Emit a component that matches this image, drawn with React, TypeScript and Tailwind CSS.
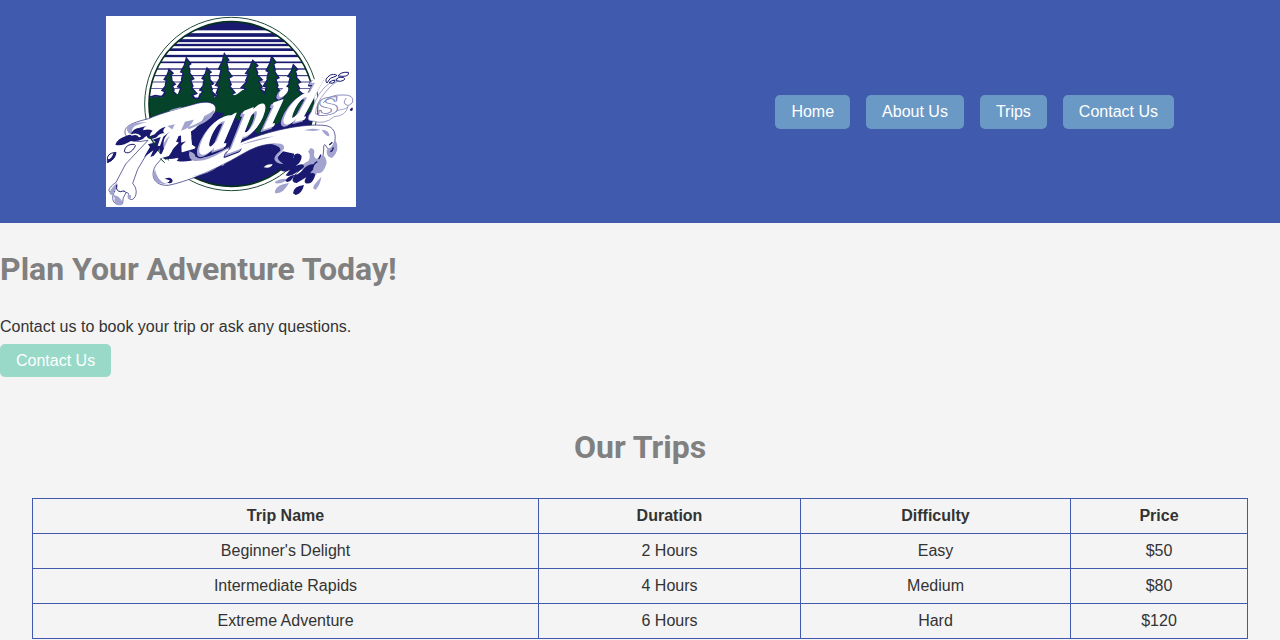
const NAV_LINKS = ["Home", "About Us", "Trips", "Contact Us"];

const TRIPS = [
  { name: "Beginner's Delight", duration: "2 Hours", difficulty: "Easy", price: "$50" },
  { name: "Intermediate Rapids", duration: "4 Hours", difficulty: "Medium", price: "$80" },
  { name: "Extreme Adventure", duration: "6 Hours", difficulty: "Hard", price: "$120" },
];

const NAVY = "#191970";
const GREEN = "#05432a";
const LILAC = "#a3a3cf";

// Sky bars behind the trees, thinning out toward the horizon
const SKY_LINES = [
  { y: 75, h: 11 },
  { y: 92, h: 9 },
  { y: 105, h: 7 },
  { y: 119, h: 8 },
  { y: 138, h: 7 },
  { y: 157, h: 5 },
  { y: 177, h: 4 },
  { y: 197, h: 3 },
  { y: 216, h: 2.5 },
  { y: 236, h: 2 },
];

const TREES = [
  { x: 207, top: 178, w: 20 },
  { x: 259, top: 144, w: 27 },
  { x: 321, top: 174, w: 21 },
  { x: 373, top: 131, w: 28 },
  { x: 458, top: 151, w: 40 },
  { x: 515, top: 139, w: 26 },
  { x: 580, top: 164, w: 25 },
];

const LETTERS = [
  { char: "R", x: 168, y: 447, size: 185, slope: "skewY(-16) skewX(-18)", shade: false },
  { char: "a", x: 291, y: 437, size: 186, slope: "skewY(-19) skewX(-18)", shade: true },
  { char: "p", x: 404, y: 388, size: 158, slope: "skewY(-21) skewX(-16)", shade: true },
  { char: "i", x: 488, y: 358, size: 148, slope: "skewY(-18) skewX(-20)", shade: true },
  { char: "d", x: 544, y: 344, size: 158, slope: "skewY(-14) skewX(-24)", shade: true },
];

function treePath(x: number, top: number, w: number) {
  const tiers = 6;
  const step = (278 - top) / tiers;
  let left = "";
  let right = "";
  for (let i = 1; i <= tiers; i++) {
    const y = top + step * i;
    const reach = 5 + (w * i) / tiers;
    const jitter = i % 2 ? 4 : -3;
    right += ` L${x + reach + jitter} ${y - 5} L${x + reach * 0.7} ${y}`;
    left = ` L${x - reach * 0.7} ${y} L${x - reach + jitter} ${y - 3}` + left;
  }
  return `M${x} ${top}${right}${left} Z`;
}

function Logo() {
  return (
    <svg viewBox="18 18 750 573" className="block h-[191px] w-[250px] bg-white">
      <defs>
        <clipPath id="badge">
          <circle cx="394" cy="282" r="247" />
        </clipPath>
      </defs>

      {/* Badge */}
      <circle cx="394" cy="282" r="260" fill="#fff" stroke="#1d4a35" strokeWidth="3" />
      <g clipPath="url(#badge)">
        <rect x="140" y="30" width="510" height="31" fill={NAVY} />
        {SKY_LINES.map((l) => (
          <rect key={l.y} x="140" y={l.y - l.h / 2} width="510" height={l.h} fill={NAVY} />
        ))}
        {TREES.map((t) => (
          <path key={t.x} d={treePath(t.x, t.top, t.w)} fill={GREEN} stroke={NAVY} strokeWidth="4" />
        ))}
        <path
          d="M140 266 L166 259 L184 262 L198 249 L232 253 L246 243 L274 256 L284 265 L296 266 L304 246 L333 248 L342 262 L354 264 L358 246 L390 248 L404 256 L412 252 L428 240 L482 242 L497 255 L507 242 L535 244 L549 255 L562 244 L600 250 L622 259 L650 263 V540 H140 Z"
          fill={GREEN}
        />
        <path d="M140 264 L166 257 L184 260 L196 250 M274 255 L284 264 L296 265 L302 250 M600 248 L622 257 L650 261" fill="none" stroke={NAVY} strokeWidth="5" />
        <path d="M140 356 L235 352 Q290 345 340 325 L400 320 L480 375 L550 330 L650 300 V540 H140 Z" fill={NAVY} />
        <path d="M190 350 Q270 352 330 334 L310 346 Q250 360 195 355 Z" fill={GREEN} />
      </g>
      <circle cx="394" cy="282" r="247" fill="none" stroke="#06301f" strokeWidth="5" />

      {/* Water running under the lettering */}
      <path
        d="M146 326 C180 310 245 293 292 280 C324 272 350 278 347 300 C342 323 305 340 264 352 L236 370 L246 388 L212 428 L198 446 L224 436 Q240 456 280 448 C335 444 372 418 420 398 C500 364 610 338 678 347 C712 352 710 394 696 411 Q684 425 677 406 Q670 398 671 420 L667 458 L651 484 L622 470 L597 480 L575 466 L544 446 Q522 448 541 423 Q562 405 522 402 C470 402 433 430 392 452 C330 484 265 514 205 526 C159 528 149 493 169 464 L190 440 L173 410 L157 404 L113 478 L98 520 C120 544 103 574 91 568 C78 562 94 547 78 548 Q66 565 68 580 C45 593 28 568 45 543 C17 553 24 533 48 517 L77 462 L144 391 Q88 404 76 373 C70 352 87 340 146 326 Z"
        fill="#fff"
        stroke={NAVY}
        strokeWidth="2"
      />
      <path d="M80 356 Q88 336 142 336 Q122 340 104 348 Q90 361 99 373 Q83 374 80 356Z" fill={LILAC} />
      <path d="M205 304 Q225 293 248 292 Q230 302 205 304Z" fill={LILAC} />
      <path
        d="M202 348 C251 334 316 327 341 299 C342 323 306 339 270 353 C241 363 217 379 204 398 C193 417 194 433 217 430 C207 441 184 433 187 416 C190 392 210 375 225 364 Z"
        fill={LILAC}
      />
      <path
        d="M211 364 Q189 381 190 407 Q190 427 214 420 Q252 403 231 395 Q215 399 209 400 Q229 373 261 360 L291 352 Q251 383 237 400 Q228 418 258 417 Q272 418 268 431 Q261 448 297 443 Q258 460 230 452 Q243 440 243 425 Q218 441 197 449 Q175 438 179 410 L190 380 Z"
        fill={NAVY}
      />
      <path d="M276 351 L349 306 L374 310 L334 356 Q292 390 294 421 Q252 434 249 452 Q228 438 248 425 Q286 416 269 398 Q253 379 306 346 Z" fill={NAVY} />
      <path d="M268 424 Q286 429 286 440 Q312 447 347 431 L394 407 Q330 455 283 453 Q263 449 268 424Z" fill={LILAC} />
      <path d="M270 500 Q315 492 354 471 Q325 494 270 500 M364 464 L378 458 L368 468Z M420 405 Q465 386 525 378 Q475 392 420 405Z M612 361 Q637 352 662 360 L640 363Z" fill={LILAC} />
      <path d="M665 359 Q688 360 688 379 Q676 378 665 359Z" fill={LILAC} />
      <path d="M165 478 Q146 525 207 523 Q174 520 165 478Z" fill={LILAC} />
      <path d="M194 506 Q216 497 218 514 Q213 525 199 516 Q208 519 209 511Z" fill={NAVY} />
      <path d="M186 432 L207 451 M176 441 L194 458" stroke={GREEN} strokeWidth="3" />

      {/* Lettering */}
      {LETTERS.map((l) => (
        <g
          key={l.char}
          transform={`translate(${l.x} ${l.y}) ${l.slope}`}
          fontFamily="Liberation Serif, serif"
          fontSize={l.size}
          fontWeight="bold"
          fontStyle="italic"
          strokeLinejoin="round"
        >
          {l.shade && (
            <text x="-5" y="5" fill={LILAC} stroke={NAVY} strokeWidth="11" paintOrder="stroke" aria-hidden="true">
              {l.char}
            </text>
          )}
          {l.shade && (
            <text x="-5" y="4" fill={LILAC} stroke={LILAC} strokeWidth="6" aria-hidden="true">
              {l.char}
            </text>
          )}
          <text fill="#fff" stroke="#fff" strokeWidth="4">
            {l.char}
          </text>
        </g>
      ))}
      {/* Bowl of the R and the gap between its leg and the next letter */}
      <path d="M262 352 Q308 337 334 312 Q340 304 341 299 Q347 322 298 345 L266 358 Z" fill={LILAC} />
      <path d="M201 447 L222 414 Q236 398 258 394 Q236 412 234 426 Q246 424 248 434 Q234 448 201 447 Z" fill={NAVY} />
      <path d="M293 352 L338 330 L316 356 Q292 382 290 412 Q276 410 276 394 Q270 376 293 352Z" fill={NAVY} />

      {/* Spray at the right of the word */}
      <path
        d="M634 305 Q651 246 690 218 Q712 198 733 207 Q701 213 674 249 Q649 278 646 311 Q673 327 713 301 Q745 296 744 289 Q738 318 702 320 Q675 345 638 333 Q613 333 634 305Z"
        fill="#fff"
        stroke="#7777b3"
        strokeWidth="2"
      />
      <text
        transform="translate(656 317) rotate(-8) scale(1.6 1)"
        fontFamily="Liberation Serif, serif"
        fontSize="108"
        fontWeight="bold"
        fontStyle="italic"
        fill="#fff"
        stroke="#7777b3"
        strokeWidth="2"
      >
        s
      </text>
      <path d="M669 279 Q690 253 726 255 Q763 253 758 276 Q747 291 738 284 Q727 279 739 264" fill="none" stroke="#7777b3" strokeWidth="2.5" />
      <path d="M681 219 Q671 208 691 195 Q713 190 709 198 L691 205 Z M708 212 Q713 198 731 203 Q741 209 721 214Z M714 198 Q722 185 745 187 Q748 199 729 199Z M687 218 Q698 208 705 212 Q707 217 696 220Z" fill="#fff" stroke={NAVY} strokeWidth="3" />
      <path d="M749 300 Q756 289 758 294 Q760 302 753 303Z" fill={NAVY} />

      {/* Left drops */}
      <path d="M46 404 Q53 386 76 379 Q91 370 95 377 Q112 372 116 381 Q125 384 143 367 Q133 398 93 393 Q65 410 46 404Z" fill={NAVY} />
      <path d="M93 373 Q98 355 119 353 L140 348 Q128 354 130 361 Q145 355 158 362 Q150 368 149 379 L164 373 Q179 354 197 350 Q184 364 194 370 Q180 368 170 382 Q145 393 140 378 Q120 389 122 377 Q111 367 93 373Z" fill={NAVY} />
      <path d="M158 389 L182 381 L173 407 L185 409 L161 437 L151 441 L160 421 L132 442 L150 411 L144 403 L167 397Z" fill={NAVY} />
      <path d="M149 379 L165 405" stroke={GREEN} strokeWidth="4" />
      <path d="M22 451 Q19 429 48 427 Q47 448 22 458Z M73 425 Q75 405 96 403 Q115 401 98 420 Q84 434 73 425Z" fill="#fff" stroke={NAVY} strokeWidth="3" />
      <path d="M22 448 Q34 449 41 428 L48 427 Q46 450 24 458Z" fill={NAVY} />
      <path d="M50 519 Q58 526 48 540 Q28 552 53 559 Q69 570 67 584 Q44 591 43 570 Q48 560 29 552 Q26 541 50 519Z M84 552 L94 557 L91 568 Q79 569 84 552Z" fill={LILAC} />
      <path d="M50 525 Q46 543 62 545 Q74 540 78 548" fill="none" stroke={NAVY} strokeWidth="3" />

      {/* Breaking wave on the right */}
      <path d="M515 402 Q557 396 552 416 L534 437 Q541 449 560 451 L547 462 Q527 461 523 447 Q523 436 541 422 Q545 410 515 402Z" fill={LILAC} />
      <path d="M549 424 L583 431 L578 451 Q568 462 553 462 Q538 456 533 444 Q535 436 549 424Z" fill={NAVY} />
      <path d="M491 472 Q501 460 518 463 Q512 477 491 472Z" fill="#fff" />
      <path d="M632 414 Q647 416 642 435 Q645 455 662 439 Q678 430 680 460 Q668 497 651 488 Q642 509 629 496 L615 482 Q606 489 606 464 L626 452 Q634 433 624 425Z M680 420 Q701 412 704 386 Q724 418 696 444 Q679 443 680 420Z M664 500 Q662 522 647 539 Q634 538 644 523Z M524 516 Q550 502 561 508 Q552 522 527 520Z M525 543 Q532 522 567 519 Q548 554 525 549Z" fill={LILAC} />
      <path
        d="M565 451 Q582 450 581 437 Q593 424 605 438 Q605 456 587 468 Q612 456 612 471 L587 493 Q594 495 608 480 Q622 462 641 463 Q639 481 630 490 Q651 486 643 503 Q635 524 617 520 Q610 515 619 502 L590 519 Q571 519 581 498 L594 484 Q570 503 557 496 L570 479 Q554 489 542 481 Z"
        fill={NAVY}
      />
      <path d="M579 550 Q581 528 612 525 Q606 551 587 555Z M556 513 Q561 499 583 494 Q577 512 562 516Z" fill={NAVY} />
      <path d="M637 481 Q638 462 652 455 M663 434 L656 447 M688 405 L697 397 M691 425 Q698 423 700 412" fill="none" stroke={NAVY} strokeWidth="4" />
    </svg>
  );
}

export default function App() {
  return (
    <div className="h-[640px] overflow-hidden bg-[#f4f4f4] font-['Liberation_Sans',Arial,sans-serif] text-base leading-[18px] text-[#333]">
      <header className="flex items-center justify-between bg-[#405aad] px-[106px] py-4">
        <Logo />
        <nav className="flex gap-4">
          {NAV_LINKS.map((link) => (
            <a key={link} href="#" className="rounded-[5px] bg-[#6b99c5] px-4 py-2 text-white">
              {link}
            </a>
          ))}
        </nav>
      </header>

      <section className="pt-[27px]">
        <h1 className="font-[Roboto,sans-serif] text-[32px] leading-[38px] font-bold text-[#808080]">
          Plan Your Adventure Today!
        </h1>
        <p className="mt-[30px]">Contact us to book your trip or ask any questions.</p>
        <a
          href="#"
          className="mt-2 block w-fit rounded-[5px] bg-[#98d9c8] px-4 pt-2 pb-[7px] text-white"
        >
          Contact Us
        </a>
      </section>

      <section className="px-8 pt-[51px]">
        <h2 className="text-center font-[Roboto,sans-serif] text-[32px] leading-[38px] font-bold text-[#808080]">
          Our Trips
        </h2>
        <table className="mt-8 w-full table-fixed border-collapse text-center">
          <colgroup>
            <col className="w-[506px]" />
            <col className="w-[262px]" />
            <col className="w-[270px]" />
            <col className="w-[177px]" />
          </colgroup>
          <thead>
            <tr>
              <th className="border border-[#405aad] p-2">Trip Name</th>
              <th className="border border-[#405aad] p-2">Duration</th>
              <th className="border border-[#405aad] p-2">Difficulty</th>
              <th className="border border-[#405aad] p-2">Price</th>
            </tr>
          </thead>
          <tbody>
            {TRIPS.map((trip) => (
              <tr key={trip.name}>
                <td className="border border-[#405aad] p-2">{trip.name}</td>
                <td className="border border-[#405aad] p-2">{trip.duration}</td>
                <td className="border border-[#405aad] p-2">{trip.difficulty}</td>
                <td className="border border-[#405aad] p-2">{trip.price}</td>
              </tr>
            ))}
          </tbody>
        </table>
      </section>
    </div>
  );
}
